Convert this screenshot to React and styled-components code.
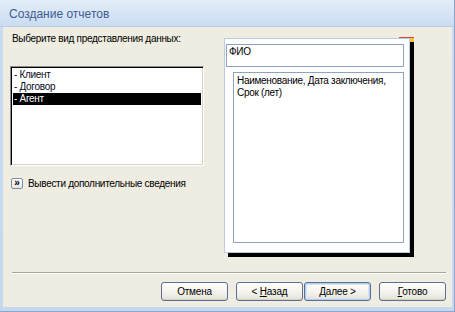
import styled, { createGlobalStyle } from "styled-components";

const GlobalStyle = createGlobalStyle`
  html, body {
    margin: 0;
    padding: 0;
    background: #ffffff;
  }
  * {
    box-sizing: border-box;
  }
`;

const listItems = ["- Клиент", "- Договор", "- Агент"];

const App = () => {
  return (
    <>
      <GlobalStyle />
      <Frame>
        <TitleBar>Создание отчетов</TitleBar>
        <Body>
          <Main>
            <LeftCol>
              <Prompt>Выберите вид представления данных:</Prompt>
              <ListBox>
                {listItems.map((item, i) => (
                  <ListItem key={item} $selected={i === 2}>
                    {item}
                  </ListItem>
                ))}
              </ListBox>
              <MoreRow>
                <MoreIcon>»</MoreIcon>
                <span>Вывести дополнительные сведения</span>
              </MoreRow>
            </LeftCol>
            <Preview>
              <Handle />
              <HeaderBox>ФИО</HeaderBox>
              <DetailBox>
                Наименование, Дата заключения,
                <br />
                Срок (лет)
              </DetailBox>
            </Preview>
          </Main>
          <Footer>
            <Separator />
            <ButtonRow>
              <Button>Отмена</Button>
              <Button $gap={8}>
                &lt; <u>Н</u>азад
              </Button>
              <Button $gap={1} $primary>
                <u>Д</u>алее &gt;
              </Button>
              <Button $gap={8}>
                <u>Г</u>отово
              </Button>
            </ButtonRow>
          </Footer>
        </Body>
      </Frame>
    </>
  );
};

export default App;

const Frame = styled.div`
  width: 455px;
  height: 312px;
  display: flex;
  flex-direction: column;
  background: linear-gradient(#e4edf9 0px, #d6e4f5 14px, #cadcf2 27px, #c6d8ef 100%);
  border-right: 1px solid #8aa6cc;
  border-bottom: 1px solid #8aa6cc;
  font-family: "Liberation Sans", Arial, sans-serif;
  font-size: 10px;
  letter-spacing: -0.3px;
  color: #000;
  white-space: nowrap;
`;

const TitleBar = styled.div`
  height: 27px;
  flex-shrink: 0;
  padding: 7px 0 0 9px;
  font-size: 12px;
  letter-spacing: 0;
  color: #3e5c8e;
  border-bottom: 1px solid #b9cde8;
`;

const Body = styled.div`
  flex: 1;
  margin: 0 2px 4px 3px;
  background: #efede1;
  display: flex;
  flex-direction: column;
`;

const Main = styled.div`
  display: flex;
  padding-left: 7px;
`;

const LeftCol = styled.div`
  width: 194px;
  display: flex;
  flex-direction: column;
`;

const Prompt = styled.div`
  margin-top: 5px;
  line-height: 13px;
  padding-left: 2px;
`;

const ListBox = styled.div`
  margin-top: 21px;
  height: 100px;
  background: #fff;
  border: 1px solid;
  border-color: #8c8c8c #ffffff #ffffff #8c8c8c;
  box-shadow: inset 1px 1px 0 #000, inset -1px -1px 0 #d6d3c8;
  padding: 2px 2px 0 2px;
`;

const ListItem = styled.div`
  height: 12px;
  line-height: 12px;
  padding-left: 1px;
  background: ${(p) => (p.$selected ? "#000" : "transparent")};
  color: ${(p) => (p.$selected ? "#fff" : "#0a0a1e")};
`;

const MoreRow = styled.div`
  margin-top: 11px;
  display: flex;
  align-items: center;
  gap: 5px;
  padding-left: 1px;
  line-height: 13px;
`;

const MoreIcon = styled.span`
  width: 12px;
  height: 11px;
  border: 1px solid #7d8fae;
  border-radius: 2px;
  background: linear-gradient(#ffffff, #e6e4dc);
  font-size: 10px;
  line-height: 8px;
  text-align: center;
  color: #000;
  font-weight: bold;
`;

const Preview = styled.div`
  position: relative;
  margin: 11px 0 0 20px;
  width: 186px;
  height: 215px;
  background: #fff;
  border: 1px solid #b9cce8;
  box-shadow: 4px 4px 0 #000;
  padding: 5px 5px 0 1px;
  display: flex;
  flex-direction: column;
  gap: 5px;
`;

const Handle = styled.div`
  position: absolute;
  top: -2px;
  right: -5px;
  width: 15px;
  height: 5px;
  border-top: 1px solid #d8442c;
  &::after {
    content: "";
    position: absolute;
    right: 0;
    top: 0;
    width: 4px;
    height: 4px;
    background: #f4c43a;
  }
`;

const HeaderBox = styled.div`
  height: 23px;
  border: 1px solid #8fa3be;
  padding: 1px 2px;
  line-height: 12px;
`;

const DetailBox = styled.div`
  margin-left: 7px;
  height: 171px;
  border: 1px solid #8fa3be;
  padding: 2px 3px;
  line-height: 12px;
`;

const Footer = styled.div`
  margin-top: auto;
  padding: 0 6px 6px 9px;
`;

const Separator = styled.div`
  height: 2px;
  border-top: 1px solid #aca899;
  border-bottom: 1px solid #ffffff;
`;

const ButtonRow = styled.div`
  margin-top: 8px;
  display: flex;
  justify-content: flex-end;
`;

const Button = styled.button`
  width: 67px;
  height: 19px;
  margin-left: ${(p) => p.$gap || 0}px;
  padding: 0;
  border: 1px solid #5b6f92;
  border-radius: 3px;
  background: linear-gradient(#ffffff, #f2f1ea 60%, #e3e1d6);
  box-shadow: ${(p) =>
    p.$primary ? "inset 0 0 0 1px #b6cdf0, inset 0 0 0 2px #d5e3f7" : "inset 0 -1px 0 #d6d3c6"};
  font-family: "Liberation Sans", Arial, sans-serif;
  font-size: 10px;
  letter-spacing: -0.2px;
  color: #000;
  & > u {
    text-decoration: underline;
  }
`;
